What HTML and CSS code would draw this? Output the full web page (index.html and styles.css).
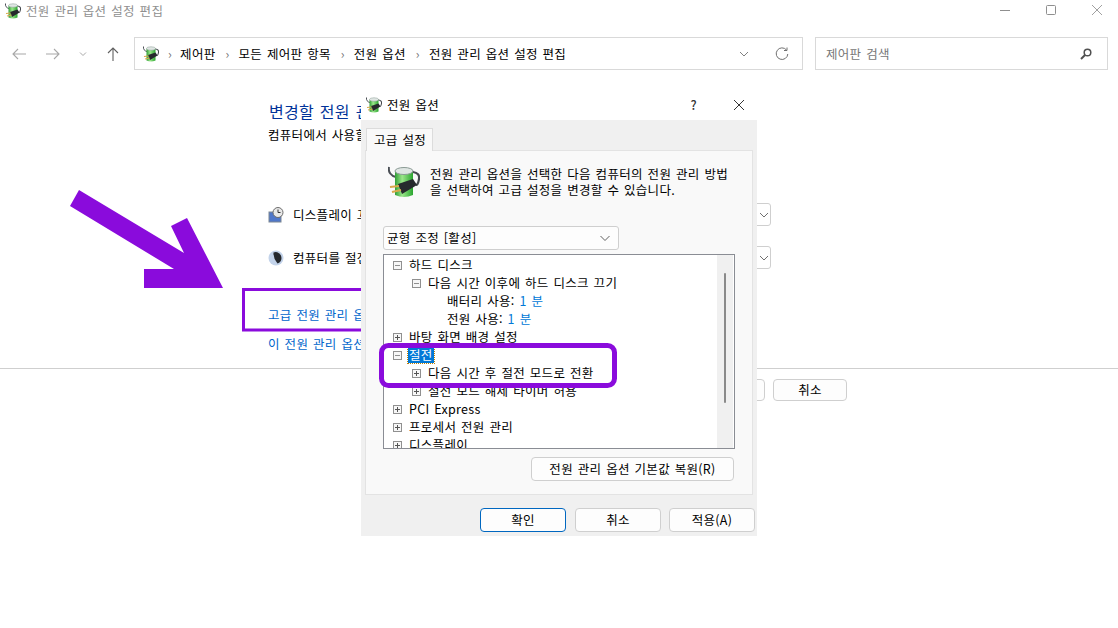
FILE: index.html
```html
<!DOCTYPE html>
<html lang="ko">
<head>
<meta charset="utf-8">
<title>전원 관리 옵션 설정 편집</title>
<link rel="stylesheet" href="styles.css">
</head>
<body>
<svg class="defs" width="0" height="0">
  <defs>
    <linearGradient id="batt" x1="0" x2="1" y1="0" y2="0">
      <stop offset="0" stop-color="#2f9e35"/>
      <stop offset=".4" stop-color="#9be68a"/>
      <stop offset="1" stop-color="#2aa52f"/>
    </linearGradient>
    <symbol id="power" viewBox="0 0 32 32">
      <path d="M1 1C0 6 3 10 8 11" fill="none" stroke="#4a4f55" stroke-width="2"/>
      <path d="M7 5h18v24q-9 4-18 0z" fill="url(#batt)"/>
      <ellipse cx="16" cy="5" rx="9" ry="3.500" fill="#dfe6e3" stroke="#8a9a94"/>
      <path d="M25 6q7 1 6 7t-3 6" fill="none" stroke="#45494e" stroke-width="2.200"/>
      <path d="M10 18l15-5 4 6-15 9z" fill="#26292d"/>
      <path d="M2 21l9-1M4 26l9-2" stroke="#d9a84a" stroke-width="2.200"/>
    </symbol>
  </defs>
</svg>

<div class="window">
  <header class="titlebar">
    <div class="title">
      <svg class="ico16"><use href="#power"/></svg>
      <span>전원 관리 옵션 설정 편집</span>
    </div>
    <div class="winbtns">
      <svg width="12" height="12" viewBox="0 0 12 12"><path d="M1 6.500h10" stroke="#8f8f8f"/></svg>
      <svg width="12" height="12" viewBox="0 0 12 12"><rect x="1.500" y="1.500" width="9" height="9" rx="1" fill="none" stroke="#8f8f8f"/></svg>
      <svg width="12" height="12" viewBox="0 0 12 12"><path d="M1 1l10 10M11 1L1 11" stroke="#a0a0a0"/></svg>
    </div>
  </header>

  <nav class="navbar">
    <div class="navbtns">
      <svg width="16" height="16" viewBox="0 0 16 16"><path d="M15 8H2M7 3L2 8l5 5" fill="none" stroke="#a8a8a8" stroke-width="1.100"/></svg>
      <svg width="16" height="16" viewBox="0 0 16 16"><path d="M1 8h13M9 3l5 5-5 5" fill="none" stroke="#a8a8a8" stroke-width="1.100"/></svg>
      <svg width="8" height="8" viewBox="0 0 8 8"><path d="M1 2.500l3 3 3-3" fill="none" stroke="#a8a8a8"/></svg>
      <svg width="16" height="16" viewBox="0 0 16 16"><path d="M8 15V2M3 7l5-5 5 5" fill="none" stroke="#606060" stroke-width="1.100"/></svg>
    </div>
    <div class="address">
      <svg class="ico16"><use href="#power"/></svg>
      <span class="sep">›</span><span>제어판</span>
      <span class="sep">›</span><span>모든 제어판 항목</span>
      <span class="sep">›</span><span>전원 옵션</span>
      <span class="sep">›</span><span>전원 관리 옵션 설정 편집</span>
      <span class="grow"></span>
      <svg width="10" height="10" viewBox="0 0 10 10"><path d="M1 3l4 4 4-4" fill="none" stroke="#808080"/></svg>
      <svg class="refresh" width="14" height="14" viewBox="0 0 14 14"><path d="M11.500 3A5.800 5.800 0 1 0 12.800 7M12 .5V3.500H9" fill="none" stroke="#707070"/></svg>
    </div>
    <div class="search">
      <span>제어판 검색</span>
      <svg width="14" height="14" viewBox="0 0 14 14"><circle cx="8.500" cy="5.500" r="3.300" fill="none" stroke="#505050" stroke-width="1.500"/><path d="M6 8l-4 4" stroke="#505050" stroke-width="2"/></svg>
    </div>
  </nav>

  <main class="content">
    <h1 class="heading">변경할 전원 관리 옵션 설정</h1>
    <p class="lead">컴퓨터에서 사용할 절전 및 디스플레이 설정을 선택합니다.</p>
    <div class="setting first">
      <svg class="ico16" viewBox="0 0 16 16"><rect x="1" y="5" width="12" height="10" fill="#4f77c9" stroke="#7c8794"/><circle cx="10" cy="5.500" r="5" fill="#e8e8e8" stroke="#6d6d6d"/><path d="M10 2.500v3h2.500" fill="none" stroke="#333"/></svg>
      <span class="setting-label">디스플레이 끄기:</span>
      <span class="combo"><svg width="10" height="10" viewBox="0 0 10 10"><path d="M1 3l4 4 4-4" fill="none" stroke="#707070"/></svg></span>
    </div>
    <div class="setting">
      <svg class="ico16" viewBox="0 0 16 16"><circle cx="8" cy="8" r="7.500" fill="#c3d3ea"/><path d="M5.500 2.500a6 6 0 0 1 8 5.500 6 6 0 0 1-4 5.500Q5 8 5.500 2.500z" fill="#25282d"/></svg>
      <span class="setting-label">컴퓨터를 절전 모드로 설정:</span>
      <span class="combo"><svg width="10" height="10" viewBox="0 0 10 10"><path d="M1 3l4 4 4-4" fill="none" stroke="#707070"/></svg></span>
    </div>
    <a class="link adv">고급 전원 관리 옵션 설정 변경</a>
    <a class="link">이 전원 관리 옵션의 기본 설정 복원</a>
  </main>

  <footer class="footer">
    <button class="btn foot-btn">확인</button>
    <button class="btn foot-btn">취소</button>
  </footer>
</div>

<svg class="annot-back" width="1118" height="628" viewBox="0 0 1118 628">
  <path d="M79 190L184 253 171 226 187 218 223 288H144V269H174L70 206z" fill="#8a0bdc"/>
  <rect x="243.500" y="289.500" width="200" height="40.500" fill="none" stroke="#8a0bdc" stroke-width="3"/>
</svg>

<section class="dialog">
  <header class="dlg-title">
    <svg class="ico16"><use href="#power"/></svg>
    <span class="dlg-name">전원 옵션</span>
    <span class="help">?</span>
    <svg width="12" height="12" viewBox="0 0 12 12"><path d="M1 1l10 10M11 1L1 11" stroke="#333"/></svg>
  </header>
  <div class="dlg-body">
    <div class="tab">고급 설정</div>
    <div class="panel">
      <div class="intro">
        <svg class="ico32"><use href="#power"/></svg>
        <p>전원 관리 옵션을 선택한 다음 컴퓨터의 전원 관리 방법<br>을 선택하여 고급 설정을 변경할 수 있습니다.</p>
      </div>
      <div class="select">
        <span>균형 조정 [활성]</span>
        <svg width="12" height="12" viewBox="0 0 12 12"><path d="M1.500 4l4.500 4.500L10.500 4" fill="none" stroke="#606060"/></svg>
      </div>
      <div class="tree">
        <ul class="rows">
          <li class="lv0"><i class="tg minus"></i>하드 디스크</li>
          <li class="lv1"><i class="tg minus"></i>다음 시간 이후에 하드 디스크 끄기</li>
          <li class="lv2">배터리 사용: <b>1 분</b></li>
          <li class="lv2">전원 사용: <b>1 분</b></li>
          <li class="lv0"><i class="tg plus"></i>바탕 화면 배경 설정</li>
          <li class="lv0"><i class="tg minus"></i><em class="sel">절전</em></li>
          <li class="lv1"><i class="tg plus"></i>다음 시간 후 절전 모드로 전환</li>
          <li class="lv1"><i class="tg plus"></i>절전 모드 해제 타이머 허용</li>
          <li class="lv0"><i class="tg plus"></i>PCI Express</li>
          <li class="lv0"><i class="tg plus"></i>프로세서 전원 관리</li>
          <li class="lv0"><i class="tg plus"></i>디스플레이</li>
        </ul>
        <div class="scroll"><span class="thumb"></span></div>
      </div>
      <div class="reset-row"><button class="btn reset">전원 관리 옵션 기본값 복원(R)</button></div>
    </div>
    <div class="actions">
      <button class="btn act primary">확인</button>
      <button class="btn act">취소</button>
      <button class="btn act">적용(A)</button>
    </div>
  </div>
</section>

<svg class="annot-front" width="248" height="52" viewBox="0 0 248 52">
  <rect x="7.500" y="5.500" width="233" height="40" rx="7" fill="none" stroke="#8a0bdc" stroke-width="5"/>
</svg>
</body>
</html>
```
FILE: styles.css
```css
* { box-sizing: border-box; }
html, body { margin: 0; padding: 0; }
body {
  position: relative;
  width: 1118px;
  height: 628px;
  overflow: hidden;
  background: #fff;
  color: #000;
  font: 12.500px/18px "Noto Sans CJK KR", "Noto Sans", sans-serif;
  letter-spacing: .3px;
  word-spacing: 1px;
}
.defs { position: absolute; }
.ico16 { width: 16px; height: 16px; flex: none; }
.ico32 { width: 32px; height: 32px; flex: none; }
ul { list-style: none; margin: 0; padding: 0; }

.titlebar { height: 22px; display: flex; align-items: center; justify-content: space-between; padding: 0 0 0 5px; }
.title { display: flex; align-items: center; gap: 5px; color: #8f8f8f; }
.winbtns { display: flex; gap: 34px; padding-right: 15px; margin-top: -2px; }

.navbar { height: 33px; margin-top: 15px; display: flex; align-items: center; }
.navbtns { width: 134px; display: flex; align-items: center; padding-left: 11px; gap: 18px; }
.address, .search { height: 33px; border: 1px solid #d9d9d9; display: flex; align-items: center; }
.address { width: 669px; padding: 0 13px 0 8px; gap: 6px; }
.address .sep { color: #707070; padding: 0 2px 0 3px; }
.address .sep ~ .sep { padding: 0 3px 0 4px; }
.grow { flex: 1; }
.refresh { margin-left: 20px; }
.search { width: 293px; margin-left: 12px; padding: 0 14px 0 10px; justify-content: space-between; color: #777; }

.content { position: relative; height: 299px; padding: 30px 0 0 269px; border-bottom: 1px solid #cfcfcf; }
.heading { margin: 0; font-size: 16px; line-height: 22px; font-weight: 400; color: #003399; }
.lead { margin: 4px 0 0 -1px; }
.setting { display: flex; align-items: center; height: 23px; gap: 9px; margin-top: 20px; margin-left: -1px; }
.setting.first { margin-top: 59px; }
.setting-label { flex: none; }
.combo { margin-left: auto; margin-right: 347px; width: 40px; height: 23px; border: 1px solid #cfcfcf; border-radius: 3px; display: flex; align-items: center; justify-content: flex-end; padding-right: 1px; }
.link { display: block; color: #0066cc; margin-left: -1px; }
.adv { margin-top: 37px; }
.adv + .link { margin-top: 11px; }

.footer { display: flex; justify-content: flex-end; gap: 8px; padding: 10px 271px 0 0; }
.btn { font: inherit; letter-spacing: inherit; word-spacing: inherit; color: #000; background: #fdfdfd; border: 1px solid #cfcfcf; border-radius: 4px; padding: 0; }
.foot-btn { width: 74px; height: 22px; line-height: 18px; }

.annot-back { position: absolute; left: 0; top: 0; }
.annot-front { position: absolute; left: 374px; top: 340px; }

.dialog { position: absolute; left: 361px; top: 90px; width: 396px; height: 446px; display: flex; flex-direction: column; }
.dlg-title { height: 31px; background: #fff; display: flex; align-items: center; padding: 0 12px 0 5px; margin-top: -1px; }
.dlg-name { margin-left: 5px; flex: 1; }
.help { margin-right: 36px; font-weight: 500; color: #333; }
.dlg-body { flex: 1; background: #f0f0f0; padding: 8px 2px 0 4px; display: flex; flex-direction: column; }
.tab { width: 67px; height: 23px; margin-left: 1px; background: #f9f9f9; border: 1px solid #dcdcdc; border-bottom: 0; padding-left: 7px; line-height: 21px; position: relative; z-index: 1; }
.panel { width: 388px; height: 345px; background: #f9f9f9; border: 1px solid #e3e3e3; padding: 15px 17px 0; margin-top: -1px; display: flex; flex-direction: column; }
.intro { display: flex; gap: 10px; height: 36px; padding-left: 5px; }
.intro p { margin: 0; line-height: 16px; }
.select { width: 236px; height: 24px; margin-top: 24px; background: #fdfdfd; border: 1px solid #cfcfcf; border-radius: 3px; display: flex; align-items: center; justify-content: space-between; padding: 0 7px 0 3px; }
.tree { width: 352px; height: 195px; margin-top: 4px; background: #fff; border: 1px solid #8a8d94; display: flex; overflow: hidden; }
.rows { flex: 1; padding-top: 1px; color: #000; }
.rows li { height: 18px; line-height: 18px; display: flex; align-items: center; white-space: pre; }
.rows b { font-weight: 400; color: #0078d7; }
.lv0 { padding-left: 9px; }
.lv1 { padding-left: 28px; }
.lv2 { padding-left: 63px; }
.tg { width: 9px; height: 9px; border: 1px solid #909090; margin-right: 7px; flex: none; background: linear-gradient(#909090,#909090) center/5px 1px no-repeat, #f7f7f7; }
.tg.plus { background: linear-gradient(#555,#555) center/5px 1px no-repeat, linear-gradient(#555,#555) center/1px 5px no-repeat, #f7f7f7; }
.sel { font-style: normal; background: #0078d7; color: #fff; outline: 1px dotted #c08000; padding: 0 1px; margin-left: -1px; line-height: 16px; }
.scroll { width: 16px; margin-right: 1px; background: #f0f0f0; display: flex; justify-content: center; padding-top: 18px; }
.thumb { width: 2px; height: 130px; background: #8a8a8a; border-radius: 1px; }
.reset-row { display: flex; justify-content: flex-end; margin-top: 8px; padding-right: 1px; }
.reset { width: 203px; height: 24px; }
.actions { display: flex; justify-content: flex-end; gap: 8px; margin-top: 13px; }
.act { width: 86px; height: 24px; }
.primary { border: 1px solid #0067c0; margin-right: 1px; }
```
